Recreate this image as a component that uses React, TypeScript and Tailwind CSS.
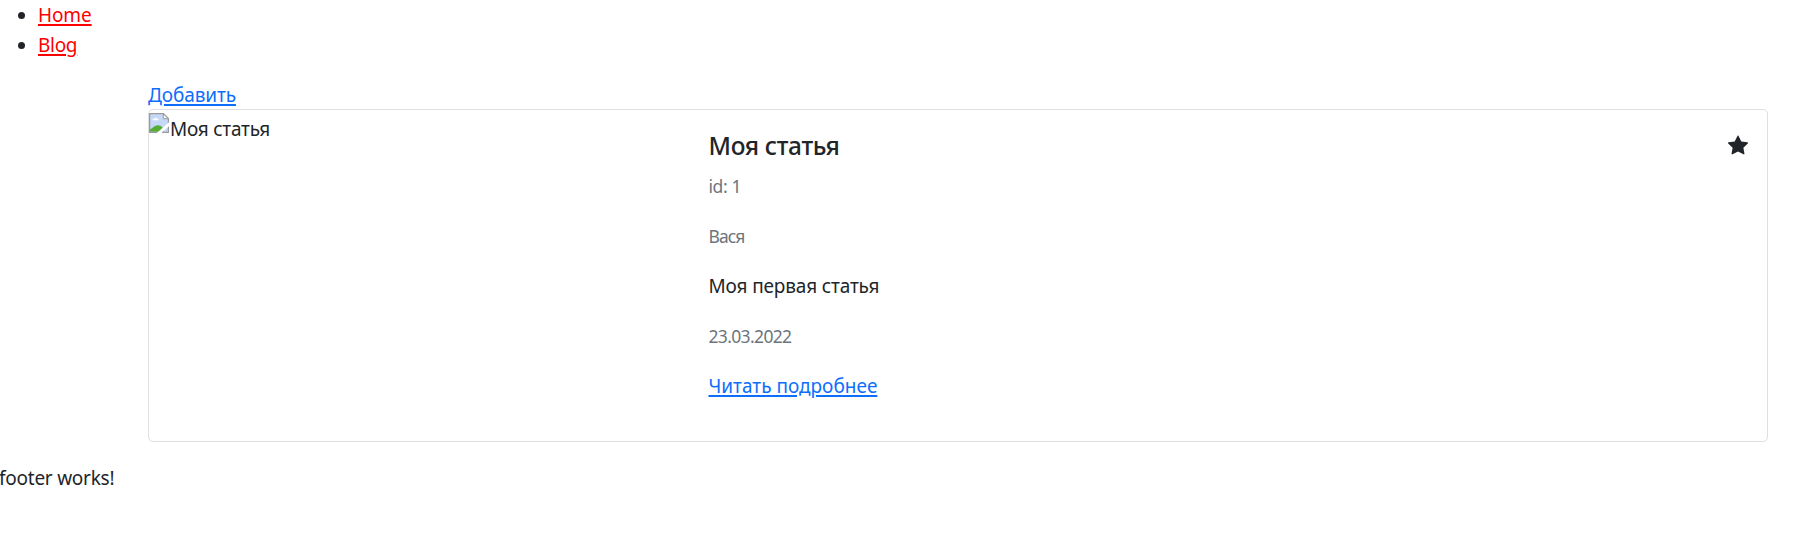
import React from 'react';

function BrokenImage() {
  return (
    <svg className="mt-[3px] h-5 w-5 shrink-0" viewBox="0 0 20 20" aria-hidden="true">
      <path d="M.6.6h13.9l4.9 4.9v13.9H.6z" fill="#c5d8f7" />
      <path d="M3.5 7.2c0-1 .8-1.5 1.6-1.4.4-1.5 2.6-1.5 3 0 1-.1 1.7.5 1.7 1.4z" fill="#fff" />
      <path d="M1 18.8v-2.6c3-1.1 4.2-4 7.8-4 2.4 0 3.9 1 4.9 2.5l1.3 4.1z" fill="#55ad35" />
      <path d="M.6 19.4V.6h13.9l4.9 4.9v13.9z" fill="none" stroke="#9a9a9a" strokeWidth="1.2" />
      <path d="M14.3.8v4.9h4.9z" fill="#fff" stroke="#9a9a9a" strokeWidth="1" />
      <path d="M20 9.2v4L12.4 20H7.8z" fill="#fff" />
    </svg>
  );
}

function Star() {
  return (
    <svg className="-mr-px mt-[5px] h-5 w-5" viewBox="0 0 16 16" fill="currentColor" aria-label="star">
      <path d="M3.612 15.443c-.386.198-.824-.149-.746-.592l.83-4.73L.173 6.765c-.329-.314-.158-.888.283-.95l4.898-.696L7.538.792c.197-.39.73-.39.927 0l2.184 4.327 4.898.696c.441.062.612.636.282.95l-3.522 3.356.83 4.73c.078.443-.36.79-.746.592L8 13.187l-4.389 2.256z" />
    </svg>
  );
}

export default function App() {
  return (
    <div className="h-[543px] overflow-hidden bg-white font-['Noto_Sans','Open_Sans',sans-serif] text-[19px] leading-[30px] text-[#212529]">
      <ul className="mb-5 list-disc pl-[38px]">
        <li><a href="#home" className="tracking-[-0.1px] text-[#ff0000] underline decoration-2 underline-offset-2">Home</a></li>
        <li><a href="#blog" className="tracking-[-0.3px] text-[#ff0000] underline decoration-2 underline-offset-2">Blog</a></li>
      </ul>
      <main className="ml-[148px] w-[1620px]">
        <div className="h-[29px]">
          <a href="#add" className="tracking-[-0.1px] text-[#0d6efd] underline decoration-2 underline-offset-2">Добавить</a>
        </div>
        <article className="flex h-[333px] rounded-[5px] border border-[#dfdfdf]">
          <div className="flex w-[539px] items-start">
            <BrokenImage />
            <span className="ml-px mt-1 tracking-[-0.25px]">Моя статья</span>
          </div>
          <div className="flex flex-1 justify-between p-5 pl-[20.5px]">
            <div>
              <h5 className="mb-2.5 pt-px text-[24.5px] font-medium leading-[30px] tracking-[-0.35px]">Моя статья</h5>
              <p className="mb-5 pt-px text-[17.5px] leading-[29px] tracking-[-0.4px] text-[#6c757d]">id: 1</p>
              <p className="mb-5 pt-px text-[17.5px] leading-[29px] tracking-[-0.9px] text-[#6c757d]">Вася</p>
              <p className="mb-5 tracking-[-0.15px]">Моя первая статья</p>
              <p className="mb-5 pt-px text-[17.5px] leading-[29px] tracking-[-0.65px] text-[#6c757d]">23.03.2022</p>
              <a href="#more" className="text-[#0d6efd] underline decoration-2 underline-offset-2">Читать подробнее</a>
            </div>
            <Star />
          </div>
        </article>
      </main>
      <footer className="-ml-[1px] mt-[21px] tracking-[-0.25px]">footer works!</footer>
    </div>
  );
}
